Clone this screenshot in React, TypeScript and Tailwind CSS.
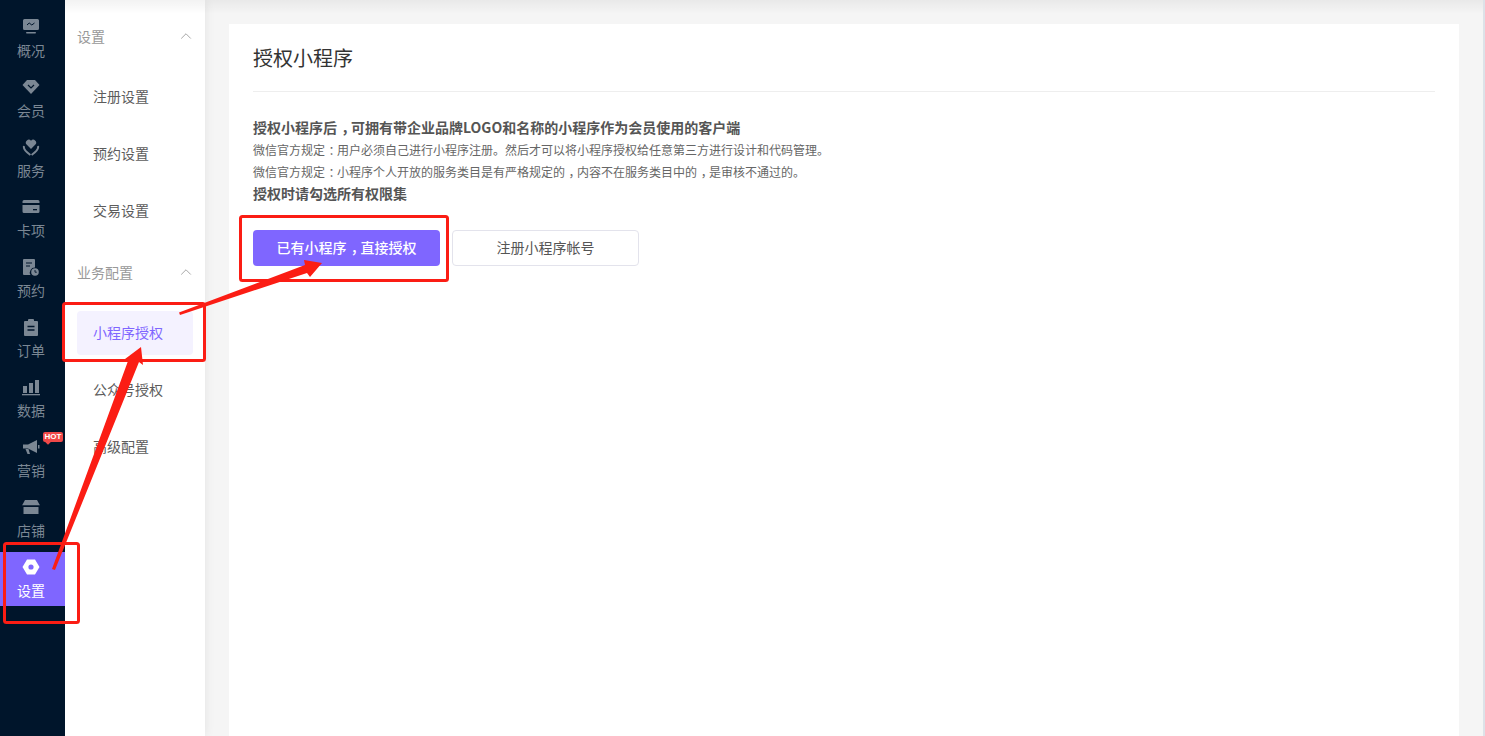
import React from "react";
import { ChevronUp } from "lucide-react";

const font = { fontFamily: '"Noto Sans CJK SC", "Liberation Sans", sans-serif' };

const icons: Record<string, React.ReactNode> = {
  概况: (
    <>
      <path d="M2.500 0h13A1.500 1.500 0 0 1 17 1.500v8a1.500 1.500 0 0 1-1.500 1.500h-13A1.500 1.500 0 0 1 1 9.500v-8A1.500 1.500 0 0 1 2.500 0Z" fill="currentColor" />
      <path d="M5 6l2.200-2 2.600 2L12.500 4" fill="none" stroke="#00152b" strokeWidth="1" />
      <rect x="4" y="13" width="10" height="1.600" rx=".8" fill="currentColor" />
    </>
  ),
  会员: (
    <>
      <path d="M5 1h8l4.500 5L9 15 .5 6Z" fill="currentColor" />
      <path d="M6 6l3 3 3-3" fill="none" stroke="#00152b" strokeWidth="1.200" />
    </>
  ),
  服务: (
    <>
      <path d="M9 10 4.600 5.600A2.900 2.900 0 0 1 9 1.800a2.900 2.900 0 0 1 4.400 3.800Z" fill="currentColor" />
      <path d="M2 7c-1 3 2 6 6.400 9M16 7c1 3-2 6-6.400 9" fill="none" stroke="currentColor" strokeWidth="2" />
    </>
  ),
  卡项: (
    <>
      <path d="M2 1h14a1.500 1.500 0 0 1 1.500 1.500V4H.5V2.500A1.500 1.500 0 0 1 2 1Z" fill="currentColor" />
      <path d="M.5 6h17v6.500A1.500 1.500 0 0 1 16 14H2a1.500 1.500 0 0 1-1.500-1.500Z" fill="currentColor" />
      <rect x="11" y="10" width="4" height="1.300" fill="#00152b" />
    </>
  ),
  预约: (
    <>
      <path d="M2 0h10a1 1 0 0 1 1 1v7.500A5 5 0 0 0 8.500 16H2a1 1 0 0 1-1-1V1a1 1 0 0 1 1-1Z" fill="currentColor" />
      <path d="M4 4h6M4 7h4" stroke="#00152b" strokeWidth="1.200" />
      <circle cx="13" cy="13" r="3.800" fill="currentColor" />
      <path d="M13 11v2.200h1.800" fill="none" stroke="#00152b" strokeWidth=".9" />
    </>
  ),
  订单: (
    <>
      <path d="M3 2h12a1 1 0 0 1 1 1v13a1 1 0 0 1-1 1H3a1 1 0 0 1-1-1V3a1 1 0 0 1 1-1Z" fill="currentColor" />
      <rect x="6" y="0" width="6" height="3" rx="1" fill="currentColor" />
      <path d="M5.500 7.500h7M5.500 11h7" stroke="#00152b" strokeWidth="1.300" />
    </>
  ),
  数据: (
    <>
      <rect x="1" y="7" width="4" height="7" fill="currentColor" />
      <rect x="7" y="4" width="4" height="10" fill="currentColor" />
      <rect x="13" y="1" width="4" height="13" fill="currentColor" />
      <rect x="0" y="15" width="18" height="1.300" fill="currentColor" />
    </>
  ),
  营销: (
    <>
      <path d="M1 5.500h5L15 1v13L6 9.500H1Z" fill="currentColor" />
      <path d="M3.500 10h3l1.500 5H5.500Z" fill="currentColor" />
      <rect x="16" y="6" width="1.500" height="3.500" fill="currentColor" />
    </>
  ),
  店铺: (
    <>
      <path d="M3 1h12l3 5.500H0Z" fill="currentColor" />
      <path d="M1.500 8h15v7h-15Z" fill="currentColor" />
      <path d="M0 7h18" stroke="#00152b" strokeWidth="1" />
    </>
  ),
  设置: (
    <path fillRule="evenodd" d="M5 .5h8L17.500 8 13 15.500H5L.5 8ZM9 5.400a2.600 2.600 0 1 0 0 5.200 2.600 2.600 0 0 0 0-5.200Z" fill="currentColor" />
  ),
};

const rail = ["概况", "会员", "服务", "卡项", "预约", "订单", "数据", "营销", "店铺", "设置"];

/* The reference font centres ， and ： in their em box. */
function Cn({ text }: { text: string }) {
  return (
    <>
      {text.split(/([，：])/).map((part, i) =>
        part === "，" || part === "：" ? (
          <span key={i} className="inline-block w-[1em] pl-[0.1em] text-center [font-feature-settings:'halt']">
            {part}
          </span>
        ) : (
          part
        ),
      )}
    </>
  );
}

function RailItem({ name }: { name: string }) {
  const active = name === "设置";
  return (
    <div className={`relative mb-[6px] flex h-[54px] w-full flex-col items-center pr-[3px] pt-[7px] ${active ? "bg-[#7f66ff] text-white" : "text-[#7b8794]"}`}>
      <svg width="18" height="17" viewBox="0 0 18 17" className="shrink-0">
        {icons[name]}
      </svg>
      <span className="mt-[4px] text-[14px] leading-[20px]">{name}</span>
      {name === "营销" && (
        <span className="absolute left-[43px] top-0 flex h-[10px] w-[20px] items-center justify-center rounded-[2px] bg-[#f04848] text-[8px] font-bold leading-none text-white" style={{ fontFamily: '"Liberation Sans", sans-serif' }}>
          HOT
          <span className="absolute left-[3px] top-[8px] h-[4px] w-[4px] rotate-45 bg-[#f04848]" />
        </span>
      )}
    </div>
  );
}

function GroupHead({ title }: { title: string }) {
  return (
    <div className="flex h-[20px] items-center justify-between text-[14px] text-[#999999]">
      <span>{title}</span>
      <ChevronUp size={18} strokeWidth={1} className="mr-[-2px] text-[#8a8a8a]" />
    </div>
  );
}

function SubItem({ label, active }: { label: string; active?: boolean }) {
  return (
    <div className={`flex h-[44px] items-center rounded-[4px] pb-[2px] pl-[16px] text-[14px] ${active ? "bg-[#f4f2ff] text-[#7f66ff]" : "text-[#5c5c5c]"}`}>
      {label}
    </div>
  );
}

export default function App() {
  return (
    <div className="relative flex h-[736px] w-[1485px] overflow-hidden bg-[#f5f5f5]" style={font}>
      <aside className="relative z-10 flex h-full w-[65px] shrink-0 flex-col bg-[#00152b] pt-[12px]">
        {rail.map((n) => (
          <RailItem key={n} name={n} />
        ))}
      </aside>

      <nav className="relative flex h-full w-[140px] shrink-0 flex-col bg-white px-[12px] pt-[26px] shadow-[0_0_10px_rgba(0,0,0,0.08)]">
        <GroupHead title="设置" />
        <div className="mt-[29px] flex flex-col gap-[13px]">
          <SubItem label="注册设置" />
          <SubItem label="预约设置" />
          <SubItem label="交易设置" />
        </div>
        <div className="mt-[29px]">
          <GroupHead title="业务配置" />
        </div>
        <div className="mt-[29px] flex flex-col gap-[13px]">
          <SubItem label="小程序授权" active />
          <SubItem label="公众号授权" />
          <SubItem label="高级配置" />
        </div>
      </nav>

      <main className="min-w-0 flex-1 px-[24px] pt-[24px]">
        <section className="h-full bg-white px-[24px]">
          <h1 className="flex h-[68px] items-center border-b border-[#eeeeee] text-[20px] font-normal text-[#333333]">授权小程序</h1>
          <div className="mt-[25px] text-[#555555]">
            <p className="pb-[2px] text-[14px] font-bold leading-[20px]">
              <Cn text="授权小程序后，可拥有带企业品牌LOGO和名称的小程序作为会员使用的客户端" />
            </p>
            <p className="text-[12px] leading-[22px] text-[#666666]">
              <Cn text="微信官方规定：用户必须自己进行小程序注册。然后才可以将小程序授权给任意第三方进行设计和代码管理。" />
            </p>
            <p className="text-[12px] leading-[22px] text-[#666666]">
              <Cn text="微信官方规定：小程序个人开放的服务类目是有严格规定的，内容不在服务类目中的，是审核不通过的。" />
            </p>
            <p className="pb-[2px] text-[14px] font-bold leading-[20px]">授权时请勾选所有权限集</p>
          </div>
          <div className="mt-[25px] flex gap-[12px]">
            <button className="h-[36px] w-[187px] rounded-[4px] bg-[#7f66ff] pb-[2px] text-[14px] font-medium text-white">
              <Cn text="已有小程序，直接授权" />
            </button>
            <button className="h-[36px] w-[187px] rounded-[4px] border border-[#e3e3ec] bg-white pb-[2px] text-[14px] text-[#555555]">注册小程序帐号</button>
          </div>
        </section>
      </main>

      <div className="h-full w-[2px] shrink-0 bg-[#dde2e8]" />

      {/* Soft shadow cast by the top edge of the window */}
      <div className="pointer-events-none absolute left-[65px] right-[2px] top-0 h-[14px] bg-linear-to-b from-black/5 to-transparent" />

      {/* Red annotations drawn over the screenshot */}
      <svg className="pointer-events-none absolute left-0 top-0 z-20" width="1485" height="736" viewBox="0 0 1485 736">
        <g fill="none" stroke="#fb1d14" strokeWidth="3">
          <rect x="4.500" y="543.500" width="74" height="79" rx="2" />
          <rect x="63.500" y="303.500" width="141" height="57" rx="2" />
          <rect x="240.500" y="216.500" width="207" height="64" rx="2" />
        </g>
        <path d="M52 569 L128 361 L125 359 L141 347 L143 365 L139 362 L55 570 Z" fill="#fb1d14" />
        <path d="M179 312.500 L305 265 L304 260 L322 263 L310 277 L307 273 L180 315 Z" fill="#fb1d14" />
      </svg>
    </div>
  );
}
